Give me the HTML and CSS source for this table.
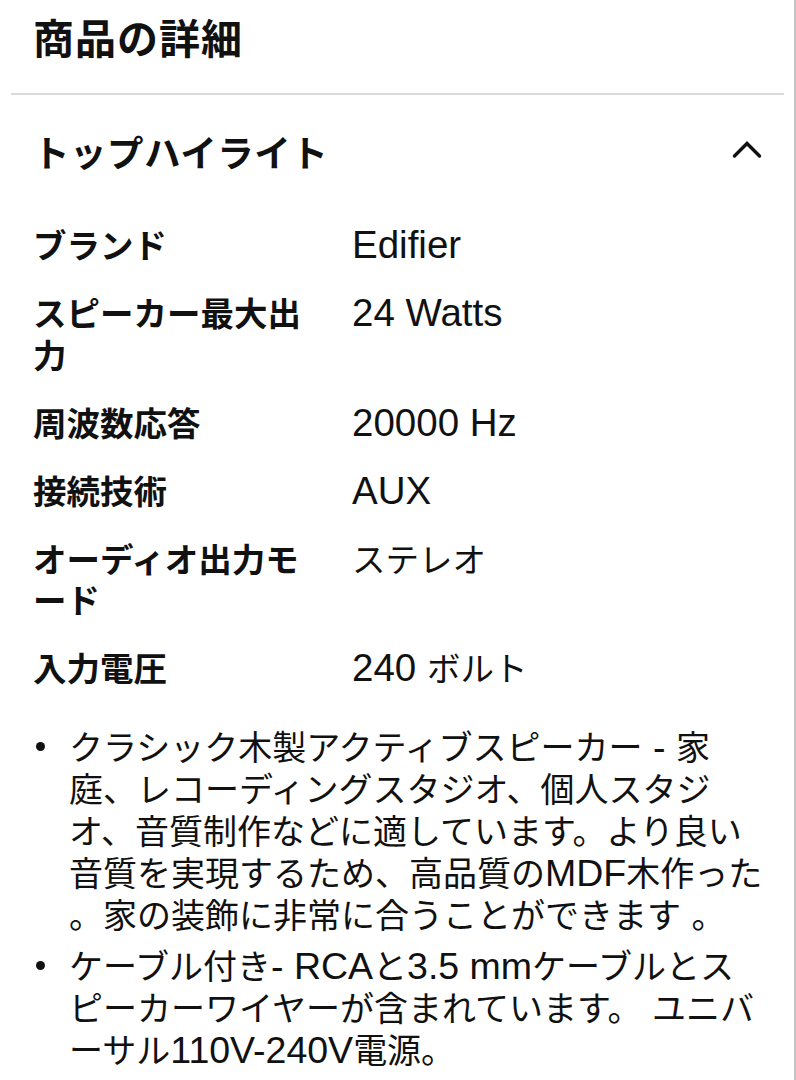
FILE: index.html
```html
<!DOCTYPE html>
<html lang="ja">
<head>
<meta charset="utf-8">
<link rel="stylesheet" href="styles.css">
</head>
<body>
<div class="page">
  <header class="header">
    <h1 class="title">商品の詳細</h1>
  </header>
  <div class="divider"></div>
  <section class="section">
    <div class="section-head">
      <h2 class="section-title">トップハイライト</h2>
      <svg class="chevron" width="30" height="20" viewBox="0 0 30 20" aria-hidden="true">
        <path d="M2.5 17 L15 4.5 L27.5 17" fill="none" stroke="#111" stroke-width="3.4" stroke-linecap="round" stroke-linejoin="miter"/>
      </svg>
    </div>
    <dl class="specs">
      <dt class="label">ブランド</dt>
      <dd class="value"><span class="lat">Edifier</span></dd>
      <dt class="label">スピーカー最大出力</dt>
      <dd class="value"><span class="lat">24 Watts</span></dd>
      <dt class="label">周波数応答</dt>
      <dd class="value"><span class="lat">20000 Hz</span></dd>
      <dt class="label">接続技術</dt>
      <dd class="value"><span class="lat">AUX</span></dd>
      <dt class="label">オーディオ出力モード</dt>
      <dd class="value">ステレオ</dd>
      <dt class="label">入力電圧</dt>
      <dd class="value"><span class="lat">240 </span>ボルト</dd>
    </dl>
    <ul class="bullets">
      <li class="bullet"><span class="dot"></span><p class="bullet-text">クラシック木製アクティブスピーカー<span class="lat"> - </span>家<br>庭、レコーディングスタジオ、個人スタジ<br>オ、音質制作などに適しています。より良い<br>音質を実現するため、高品質の<span class="lat">MDF</span>木作った<br>。家の装飾に非常に合うことができます<span class="lat"> </span>。</p></li>
      <li class="bullet"><span class="dot"></span><p class="bullet-text">ケーブル付き<span class="lat">- RCA</span>と<span class="lat">3.5 mm</span>ケーブルとス<br>ピーカーワイヤーが含まれています。<span class="lat"> </span>ユニバ<br>ーサル<span class="lat">110V-240V</span>電源。</p></li>
    </ul>
  </section>
</div>
</body>
</html>
```
FILE: styles.css
```css
* { box-sizing: border-box; }
html, body {
  margin: 0;
  padding: 0;
  background: #fff;
}
body {
  font-family: "Noto Sans CJK JP", "Noto Sans", sans-serif;
  color: #111;
}
.page {
  width: 796px;
  height: 1080px;
  overflow: hidden;
  border-right: 2px solid #c4c4c4;
}
.header {
  padding: 8px 33px 0;
  height: 93px;
}
.title {
  margin: 0;
  font-size: 41px;
  line-height: 56px;
  font-weight: 700;
  letter-spacing: 1px;
}
.divider {
  height: 2px;
  background: #dadada;
  margin: 0 10px 0 11px;
}
.section {
  padding: 0 0 0 33px;
}
.section-head {
  display: flex;
  align-items: center;
  justify-content: space-between;
  margin-top: 31px;
  padding-right: 32px;
}
.section-title {
  margin: 0;
  font-size: 36.5px;
  line-height: 52px;
  font-weight: 700;
  letter-spacing: 0.5px;
}
.chevron {
  display: block;
  margin-top: -6px;
}
.specs {
  display: grid;
  grid-template-columns: 283px 1fr;
  column-gap: 36px;
  row-gap: 26.5px;
  margin: 45px 0 0;
}
.label {
  margin: 0;
  font-size: 33.5px;
  line-height: 41.5px;
  font-weight: 700;
}
.value {
  margin: 0;
  font-size: 33.5px;
  line-height: 41.5px;
  font-weight: 400;
}
.lat {
  font-family: "Liberation Sans", Arial, sans-serif;
  font-size: 38.5px;
  line-height: 0.9;
}
.bullets {
  list-style: none;
  margin: 37px 0 0;
  padding: 0;
}
.bullet {
  display: flex;
  align-items: flex-start;
  margin-bottom: 8px;
}
.dot {
  flex: none;
  width: 9px;
  height: 9px;
  border-radius: 50%;
  background: #111;
  margin: 17px 24px 0 3px;
}
.bullet-text {
  margin: 0;
  font-size: 34px;
  line-height: 42.2px;
  white-space: nowrap;
}
.bullet-text .lat {
  font-size: 37.5px;
}
```
